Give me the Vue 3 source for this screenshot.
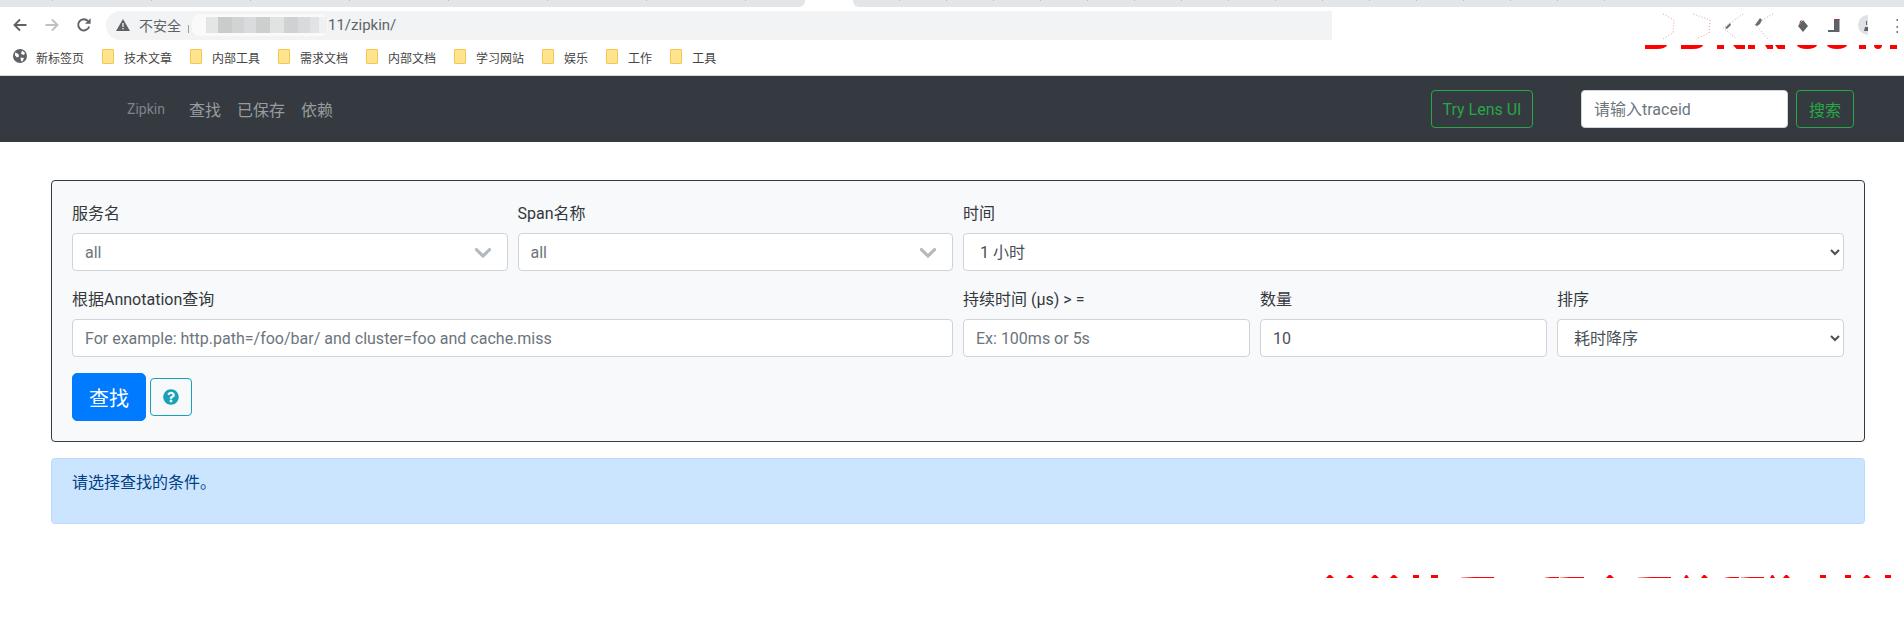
<script setup>
const bookmarks = ['技术文章', '内部工具', '需求文档', '内部文档', '学习网站', '娱乐', '工作', '工具']
const blurBlocks = [
  ['#e4e6e6', 12], ['#c9cccc', 14], ['#d2d4d4', 12], ['#d9dcdd', 12], ['#cdcece', 14],
  ['#dfe4e2', 14], ['#d0d1d3', 14], ['#d9dadc', 12], ['#e2e3e4', 9], ['#f0f0f0', 8]
]
const topStrips = [
  [1645, 1667, 'd'], [1681, 1703, 'd'], [1717, 1724, 's'], [1733, 1745, 'k'], [1748, 1755, 's'],
  [1765, 1773, 'k'], [1775, 1785, 'k'], [1797, 1817, 'o'], [1827, 1847, 'o'], [1859, 1866, 's'],
  [1874, 1882, 'o'], [1890, 1897, 's']
]
const bottomStrips = [
  [1326, 1334, 't'], [1346, 1354, 't'], [1371, 1379, 't'], [1390, 1398, 't'], [1413, 1419, 's'],
  [1431, 1438, 's'], [1461, 1494, 'l'], [1545, 1559, 'l'], [1560, 1584, 'l'], [1606, 1614, 't'],
  [1638, 1671, 'l'], [1684, 1689, 't'], [1701, 1708, 't'], [1725, 1739, 'l'], [1741, 1764, 'l'],
  [1770, 1775, 't'], [1783, 1790, 't'], [1820, 1826, 's'], [1845, 1851, 's'], [1863, 1871, 't'],
  [1885, 1891, 's']
]
function stripStyle(list, i) {
  const prev = i === 0 ? 0 : list[i - 1][1]
  return { marginLeft: list[i][0] - prev + 'px', width: list[i][1] - list[i][0] + 'px' }
}
</script>

<template>
  <div class="page">
    <div class="tabstrip">
      <div class="tab tab-left"></div>
      <div class="tab-gap"></div>
      <div class="tab tab-right"><div class="tab-ticks"></div></div>
    </div>

    <div class="toolbar">
      <svg class="tool" width="16" height="16" viewBox="0 0 16 16"><path d="M14.5 8H3M8 2.5 2.5 8 8 13.5" fill="none" stroke="#5f6368" stroke-width="1.9"/></svg>
      <svg class="tool tool-fwd" width="16" height="16" viewBox="0 0 16 16"><path d="M1.5 8H13M8 2.5 13.5 8 8 13.5" fill="none" stroke="#bdc1c6" stroke-width="1.9"/></svg>
      <svg class="tool tool-reload" width="16" height="16" viewBox="0 0 16 16"><path d="M13.2 9.4A5.6 5.6 0 1 1 12 4.1" fill="none" stroke="#5f6368" stroke-width="1.9"/><path d="M14.6 1.2v5.6H9z" fill="#5f6368"/></svg>
      <div class="addressbar">
        <svg class="warn" width="14" height="12" viewBox="0 0 14 12"><path d="M7 0 14 12H0z" fill="#5f6368"/><path d="M6.4 4h1.2v4H6.4zM6.4 9h1.2v1.2H6.4z" fill="#fff"/></svg>
        <span class="insecure">不安全</span>
        <span class="sep"></span>
        <div class="blurred">
          <span v-for="(b, i) in blurBlocks" :key="i" class="blur-block" :style="{ background: b[0], width: b[1] + 'px' }"></span>
        </div>
        <span class="url">11/zipkin/</span>
      </div>
      <svg class="extensions" width="244" height="33" viewBox="1660 7 244 33">
        <g fill="none" stroke="#e39aa9" stroke-width="1" stroke-dasharray="1 2">
          <path d="M1663 14 1674 20 1673 33 1663 39"/>
          <path d="M1693 14 1710 20 1709 33 1696 39"/>
          <path d="M1743 14 1723 28 1737 39"/>
          <path d="M1773 14 1755 24 1768 39"/>
        </g>
        <path d="M1725 28l5-5 1 2-4 4zM1755 25l5-7 2 2-2 4-3 2z" fill="#6a6e73"/>
        <path d="M1803 20l5 6-5 6-5-6z" fill="#5f6368"/>
        <path d="M1800 21l2-1-3 6z" fill="#a83a4a"/>
        <path d="M1834 19h5.500v13h-11.500v-2h6z" fill="#5f6368"/>
        <path d="M1834 19h5.500v1h-5.500z" fill="#a83a4a"/>
        <path d="M1868 15a10 10 0 0 0 0 20z" fill="#dfe1e5"/>
        <path d="M1866 21h1v4h-1zM1865 27h3v4h-4z" fill="#5f6368"/>
        <path d="M1896.500 19h1.500v2h-1.500zM1896.500 26h1.500v2h-1.500zM1896.500 31h1.500v2h-1.500z" fill="#777"/>
      </svg>
    </div>

    <div class="bookmarks">
      <svg class="globe" width="14" height="14" viewBox="0 0 14 14">
        <circle cx="7" cy="7" r="7" fill="#5f6368"/>
        <path d="M2 3.500 5.500 5 6 7.500 4 8.500 2 6.500zM9 1.500 12 4 11 6 8 5zM7.500 8.500l3.500.5-1.500 3.500-1.500-.5z" fill="#fff"/>
      </svg>
      <span class="bm-first">新标签页</span>
      <div v-for="b in bookmarks" :key="b" class="bm">
        <span class="folder"></span>
        <span>{{ b }}</span>
      </div>
      <div class="top-strips">
        <span v-for="(s, i) in topStrips" :key="i" class="top-strip" :class="'ts-' + s[2]" :style="stripStyle(topStrips, i)"></span>
      </div>
    </div>

    <nav class="navbar">
      <a class="brand">Zipkin</a>
      <a class="nav-link">查找</a>
      <a class="nav-link">已保存</a>
      <a class="nav-link">依赖</a>
      <button class="btn-outline lens">Try Lens UI</button>
      <input class="trace" placeholder="请输入traceid" />
      <button class="btn-outline search">搜索</button>
    </nav>

    <main class="content">
      <form class="card" @submit.prevent>
        <div class="row">
          <div class="col c3">
            <label>服务名</label>
            <div class="rselect"><span>all</span>
              <svg width="28" height="28" viewBox="0 0 20 20"><path d="M4.516 7.548c.436-.446 1.043-.481 1.576 0L10 11.295l3.908-3.747c.533-.481 1.141-.446 1.574 0 .436.445.408 1.197 0 1.615-.406.418-4.695 4.502-4.695 4.502a1.095 1.095 0 0 1-1.576 0S4.924 9.581 4.516 9.163c-.409-.418-.436-1.170 0-1.615z" fill="#b3babf"/></svg>
            </div>
          </div>
          <div class="col c3">
            <label>Span名称</label>
            <div class="rselect"><span>all</span>
              <svg width="28" height="28" viewBox="0 0 20 20"><path d="M4.516 7.548c.436-.446 1.043-.481 1.576 0L10 11.295l3.908-3.747c.533-.481 1.141-.446 1.574 0 .436.445.408 1.197 0 1.615-.406.418-4.695 4.502-4.695 4.502a1.095 1.095 0 0 1-1.576 0S4.924 9.581 4.516 9.163c-.409-.418-.436-1.170 0-1.615z" fill="#b3babf"/></svg>
            </div>
          </div>
          <div class="col c6">
            <label>时间</label>
            <select class="control"><option>1 小时</option></select>
          </div>
        </div>
        <div class="row">
          <div class="col c6">
            <label>根据Annotation查询</label>
            <input class="control" placeholder="For example: http.path=/foo/bar/ and cluster=foo and cache.miss" />
          </div>
          <div class="col c2">
            <label>持续时间 (μs) &gt; =</label>
            <input class="control" placeholder="Ex: 100ms or 5s" />
          </div>
          <div class="col c2">
            <label>数量</label>
            <input class="control" value="10" />
          </div>
          <div class="col c2">
            <label>排序</label>
            <select class="control"><option>耗时降序</option></select>
          </div>
        </div>
        <div class="actions">
          <button class="find">查找</button>
          <button class="help">
            <svg width="16" height="16" viewBox="0 0 512 512"><path fill="#17a2b8" d="M504 256c0 136.997-111.043 248-248 248S8 392.997 8 256C8 119.083 119.043 8 256 8s248 111.083 248 248zM262.655 90c-54.497 0-89.255 22.957-116.549 63.758-3.536 5.286-2.353 12.415 2.715 16.258l34.699 26.31c5.205 3.947 12.621 3.008 16.665-2.122 17.864-22.658 30.113-35.797 57.303-35.797 20.429 0 45.698 13.148 45.698 32.958 0 14.976-12.363 22.667-32.534 33.976C247.128 238.528 216 254.941 216 296v4c0 6.627 5.373 12 12 12h56c6.627 0 12-5.373 12-12v-1.333c0-28.462 83.186-29.647 83.186-106.667 0-58.002-60.165-102-116.531-102zM256 338c-25.365 0-46 20.635-46 46 0 25.364 20.635 46 46 46s46-20.636 46-46c0-25.365-20.635-46-46-46z"/></svg>
          </button>
        </div>
      </form>
      <div class="alert"><p>请选择查找的条件。</p></div>
    </main>

    <div class="bottom-strips">
      <span v-for="(s, i) in bottomStrips" :key="i" class="bottom-strip" :class="'bs-' + s[2]" :style="stripStyle(bottomStrips, i)"></span>
    </div>
  </div>
</template>

<style scoped>
.page {
  width: 1904px;
  height: 617px;
  overflow: hidden;
  background: #fff;
  color: #212529;
  font-family: Roboto, "Noto Sans CJK SC", sans-serif;
  font-size: 16px;
}
.tabstrip { display: flex; height: 7px; }
.tab { background: #e3e6e9; height: 7px; }
.tab-left {
  width: 805px;
  border-bottom-right-radius: 6px;
  background-image: repeating-linear-gradient(90deg, transparent 0 52px, #bdbfc2 52px 53px, transparent 53px 99px);
  background-size: 100% 1px;
  background-repeat: no-repeat;
}
.tab-gap { width: 48px; }
.tab-right { flex: 1; border-bottom-left-radius: 6px; }
.tab-ticks {
  width: 796px;
  height: 1px;
  background-image: repeating-linear-gradient(90deg, transparent 0 46px, #bdbfc2 46px 47px);
}
.toolbar { display: flex; align-items: flex-start; height: 33px; position: relative; }
.tool { margin-top: 10px; flex: none; }
.toolbar .tool:nth-child(1) { margin-left: 12px; }
.tool-fwd { margin-left: 16px; }
.tool-reload { margin-left: 16px; }
.addressbar {
  box-sizing: border-box;
  margin-left: 14px;
  margin-top: 4px;
  width: 1226px;
  height: 29px;
  padding-bottom: 2px;
  flex: none;
  display: flex;
  align-items: center;
  background: #f1f3f4;
  border-radius: 15px 0 0 15px;
  font-size: 14px;
}
.warn { margin-left: 10px; flex: none; }
.insecure { margin-left: 9px; color: #5f6368; font-size: 14px; }
.sep { width: 1px; height: 8px; background: #9a9da0; margin: 8px 0 0 7px; }
.blurred {
  display: flex;
  height: 16px;
  margin-left: 3px;
  width: 121px;
  padding: 3px 1px 3px 14px;
  box-sizing: content-box;
  background: #fafafa;
  border-radius: 8px;
}
.blur-block { height: 16px; flex: none; }
.url { color: #5f6368; margin-left: 0; font-size: 15px; }
.extensions { margin-left: auto; flex: none; }
.bookmarks {
  display: flex;
  align-items: center;
  height: 35px;
  position: relative;
  font-size: 12px;
  color: #444;
}
.globe { margin-left: 13px; flex: none; margin-top: -3px; }
.bm-first { margin-left: 9px; margin-top: -1px; margin-right: 18px; }
.bm { display: flex; align-items: center; gap: 10px; margin-right: 18px; }
.folder {
  width: 10px;
  height: 13px;
  background: #ffe38e;
  border: 1px solid #f0c84e;
  border-radius: 1px;
  flex: none;
  margin-top: -2px;
}
.top-strips {
  position: absolute;
  left: 0;
  top: 5px;
  height: 4px;
  display: flex;
}
.top-strip { height: 4px; background: #f00; flex: none; }
.ts-d { border-radius: 0 0 10px 0 / 0 0 4px 0; }
.ts-o { border-radius: 0 0 50% 50% / 0 0 100% 100%; }
.ts-k { clip-path: polygon(0 0, 100% 0, 100% 100%, 30% 100%); }
.navbar {
  display: flex;
  align-items: center;
  box-sizing: border-box;
  height: 67px;
  padding-left: 127px;
  background: #343a40;
  border-top: 1px solid #d6d7d8;
}
.brand { color: #7f8489; font-size: 14px; width: 62px; }
.nav-link { color: #989c9f; margin-right: 16px; }
.btn-outline {
  font: inherit;
  height: 38px;
  background: transparent;
  color: #28a745;
  border: 1px solid #28a745;
  border-radius: 4px;
  padding: 0;
}
.lens { width: 102px; margin-left: auto; }
.trace {
  font: inherit;
  box-sizing: border-box;
  width: 207px;
  height: 38px;
  margin-left: 48px;
  padding: 0 12px;
  border: 1px solid #ced4da;
  border-radius: 4px;
  color: #495057;
  outline: none;
}
.trace::placeholder, .control::placeholder { color: #6c757d; opacity: 1; }
.search { width: 58px; margin-left: 8px; margin-right: 50px; }
.content { padding: 38px 39px 0 51px; }
.card {
  display: block;
  box-sizing: border-box;
  height: 262px;
  padding: 20px;
  background: #f8f9fa;
  border: 1px solid #343a40;
  border-radius: 4px;
}
.row { display: grid; grid-template-columns: repeat(12, 1fr); column-gap: 10px; margin-bottom: 16px; }
.col { display: flex; flex-direction: column; min-width: 0; }
.c2 { grid-column: span 2; }
.c3 { grid-column: span 3; }
.c6 { grid-column: span 6; }
label { line-height: 24px; margin-bottom: 7px; padding-top: 1px; color: #33383d; }
.control {
  font: inherit;
  box-sizing: border-box;
  width: 100%;
  height: 38px;
  padding: 6px 12px;
  background: #fff;
  border: 1px solid #ced4da;
  border-radius: 4px;
  color: #495057;
  outline: none;
}
.rselect {
  box-sizing: border-box;
  height: 38px;
  display: flex;
  align-items: center;
  justify-content: space-between;
  padding: 0 10px 0 12px;
  background: #fff;
  border: 1px solid #ced4da;
  border-radius: 4px;
  color: #6c757d;
}
.actions { display: flex; align-items: center; gap: 4px; }
.find {
  font: inherit;
  font-size: 20px;
  width: 74px;
  height: 48px;
  color: #fff;
  background: #007bff;
  border: 1px solid #007bff;
  border-radius: 5px;
  padding: 0;
}
.help {
  width: 42px;
  height: 38px;
  background: transparent;
  border: 1px solid #17a2b8;
  border-radius: 4px;
  padding: 0;
  display: flex;
  align-items: center;
  justify-content: center;
}
.alert {
  box-sizing: border-box;
  height: 66px;
  margin-top: 16px;
  padding: 12px 20px;
  background: #cce5ff;
  border: 1px solid #b8daff;
  border-radius: 4px;
  color: #004085;
}
.alert p { margin: 0; line-height: 24px; }
.bottom-strips { display: flex; align-items: flex-end; height: 3px; margin-top: 51px; }
.bottom-strip { background: #f00; flex: none; height: 3px; }
.bs-t { clip-path: polygon(35% 0, 60% 0, 100% 100%, 0 100%); }
.bs-l { height: 1px; background: linear-gradient(90deg, #f9b9b9, #f00 40%); }
</style>
